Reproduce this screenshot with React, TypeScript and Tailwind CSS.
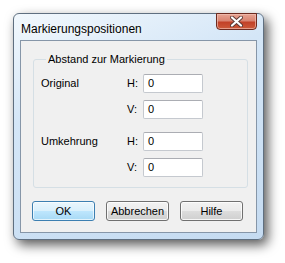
import React from 'react';

const font = { fontFamily: '"Liberation Sans", Arial, sans-serif' };

const NumberField: React.FC<{ label: string; value: string }> = ({ label, value }) => {
  return (
    <div className="flex items-center h-[19px]">
      <span className="w-[16px] text-[11px] leading-none">{label}</span>
      <div className="w-[60px] h-[19px] border border-[#c5c9cf] border-t-[#abadb3] rounded-[2px] bg-white flex items-center pl-[4px] text-[11px]">
        {value}
      </div>
    </div>
  );
};

const Button: React.FC<{ label: string; primary?: boolean }> = ({ label, primary }) => {
  return (
    <button
      className={`w-[63px] h-[20px] rounded-[3px] border text-[11px] leading-none text-black ${
        primary
          ? 'border-[#3c7fb1] bg-[linear-gradient(#eaf6fd_0%,#d9f0fc_50%,#bee6fd_51%,#a7d9f5_100%)] shadow-[inset_0_0_0_1px_#ffffffaa]'
          : 'border-[#707070] bg-[linear-gradient(#f2f2f2_0%,#ebebeb_50%,#dddddd_51%,#cfcfcf_100%)] shadow-[inset_0_0_0_1px_#ffffffcc]'
      }`}
    >
      {label}
    </button>
  );
};

export default function App() {
  return (
    <div className="w-[285px] h-[263px] bg-white overflow-hidden" style={font}>
      <div className="ml-[13px] mt-[13px] w-[251px] h-[227px] rounded-[6px] border border-[#5f6f80] bg-[linear-gradient(160deg,#f2f8fd_0%,#d4e6f7_35%,#c5dbf1_100%)] shadow-[4px_5px_12px_rgba(0,0,0,0.65)] flex flex-col">
        {/* title bar */}
        <div className="h-[26px] flex items-start justify-between pl-[7px] pr-[6px]">
          <span className="mt-[6px] text-[12px] text-black [text-shadow:0_0_6px_#ffffff]">Markierungspositionen</span>
          <div className="w-[41px] h-[17px] -mt-px rounded-b-[4px] border border-[#6d2a1f] bg-[linear-gradient(#e8a493_0%,#d98471_45%,#c24128_55%,#cc5a3a_100%)] shadow-[inset_0_0_0_1px_#f2c2b5aa] flex items-center justify-center">
            <svg width="13" height="11" viewBox="0 0 13 11">
              <path d="M2 1.5 L11 9.5 M11 1.5 L2 9.5" stroke="#5a3a36" strokeWidth="4" strokeLinecap="round" />
              <path d="M2 1.5 L11 9.5 M11 1.5 L2 9.5" stroke="#ffffff" strokeWidth="2.2" strokeLinecap="round" />
            </svg>
          </div>
        </div>
        {/* client area */}
        <div className="mx-[6px] h-[193px] border border-[#8696a8] bg-[#f0f0f0] text-black">
          <fieldset className="ml-[12px] mt-[10px] w-[215px] h-[137px] border border-[#d5dfe5] rounded-[3px] pl-[7px]">
            <legend className="ml-[5px] px-[2px] text-[11px] leading-[16px]">Abstand zur Markierung</legend>
            <div className="mt-[7px] flex">
              <span className="w-[86px] text-[11px] leading-[19px]">Original</span>
              <div className="flex flex-col gap-[7px]">
                <NumberField label="H:" value="0" />
                <NumberField label="V:" value="0" />
              </div>
            </div>
            <div className="mt-[13px] flex">
              <span className="w-[86px] text-[11px] leading-[19px]">Umkehrung</span>
              <div className="flex flex-col gap-[7px]">
                <NumberField label="H:" value="0" />
                <NumberField label="V:" value="0" />
              </div>
            </div>
          </fieldset>
          <div className="ml-[11px] mt-[13px] flex gap-[11px]">
            <Button label="OK" primary />
            <Button label="Abbrechen" />
            <Button label="Hilfe" />
          </div>
        </div>
      </div>
    </div>
  );
}
